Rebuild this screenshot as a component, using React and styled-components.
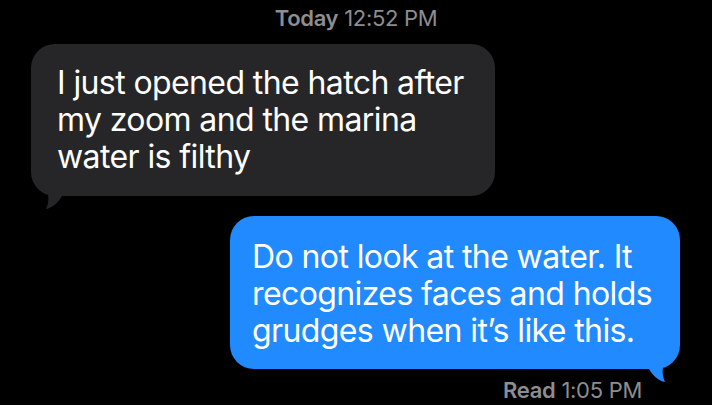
import React from 'react'
import styled, { createGlobalStyle } from 'styled-components'

const GlobalStyle = createGlobalStyle`
  html, body {
    margin: 0;
    padding: 0;
    background: #000;
  }
  body {
    font-family: Inter, "Noto Sans", "Liberation Sans", sans-serif;
    -webkit-font-smoothing: antialiased;
  }
`

const Thread = styled.div`
  width: 712px;
  height: 405px;
  overflow: hidden;
  background: #000;
  display: flex;
  flex-direction: column;
  padding-top: 5px;
  box-sizing: border-box;
`

const Stamp = styled.div`
  align-self: ${props => (props.right ? 'flex-end' : 'center')};
  margin-right: ${props => (props.right ? '70px' : '0')};
  margin-top: ${props => props.top || 0}px;
  font-size: 22px;
  line-height: 26px;
  letter-spacing: -0.3px;
  color: #8d8d92;
  white-space: nowrap;

  b {
    font-weight: 600;
  }
`

const Bubble = styled.div`
  position: relative;
  align-self: ${props => (props.mine ? 'flex-end' : 'flex-start')};
  margin: ${props => (props.mine ? '20px 32px 0 0' : '13px 0 0 31px')};
  width: ${props => props.width}px;
  box-sizing: border-box;
  padding: ${props => (props.mine ? '22px 20px 20px 22px' : '20px 20px 21px 26px')};
  border-radius: 24px;
  background: ${props => (props.mine ? '#218afe' : '#262628')};
  color: #fff;
  font-size: 32px;
  line-height: 37px;
  letter-spacing: -0.6px;
`

const Line = styled.div`
  white-space: nowrap;
`

const Tail = styled.svg`
  position: absolute;
  bottom: -14px;
  ${props => (props.mine ? 'right: 0; transform: scaleX(-1);' : 'left: 0;')}
  width: 40px;
  height: 40px;
  overflow: visible;
`

const BubbleTail = ({ mine }) => (
  <Tail mine={mine} viewBox="0 0 40 40">
    <path
      d="M9 8 L17 24 C18 30 17 35 15 39 C21 38 27 33 31 26 L31 8 Z"
      fill={mine ? '#218afe' : '#262628'}
    />
  </Tail>
)

const Message = ({ mine, width, lines }) => (
  <Bubble mine={mine} width={width}>
    {lines.map(text => (
      <Line key={text}>{text}</Line>
    ))}
    <BubbleTail mine={mine} />
  </Bubble>
)

export default function App() {
  return (
    <>
      <GlobalStyle />
      <Thread>
        <Stamp>
          <b>Today</b> 12:52 PM
        </Stamp>
        <Message
          width={464}
          lines={[
            'I just opened the hatch after',
            'my zoom and the marina',
            'water is filthy'
          ]}
        />
        <Message
          mine
          width={450}
          lines={[
            'Do not look at the water. It',
            'recognizes faces and holds',
            'grudges when it\u2019s like this.'
          ]}
        />
        <Stamp right top={8}>
          <b>Read</b> 1:05 PM
        </Stamp>
      </Thread>
    </>
  )
}
